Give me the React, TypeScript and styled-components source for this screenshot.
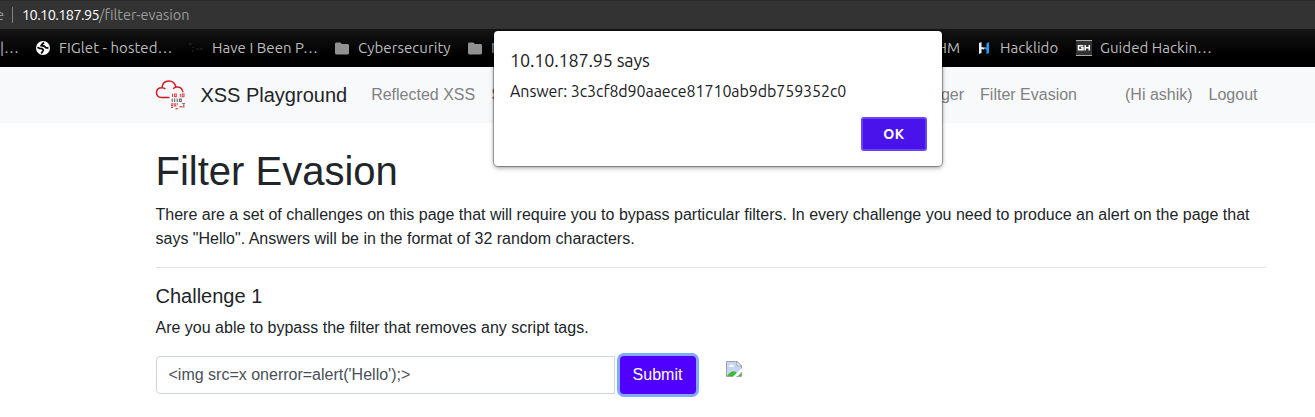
import React from "react";
import styled, { createGlobalStyle } from "styled-components";

const GlobalStyle = createGlobalStyle`
  * { box-sizing: border-box; }
  body { margin: 0; background: #fff; overflow: hidden; }
  button, input { font: inherit; }
`;

const ui = `"Ubuntu", "Noto Sans", sans-serif`;

const Screen = styled.div`
  position: relative;
  width: 1315px;
  height: 417px;
  overflow: hidden;
  color: #212529;
  font: 16px/24px "Liberation Sans", Arial, sans-serif;
`;

const AddressBar = styled.div`
  display: flex;
  align-items: center;
  height: 29px;
  background: #333;
  border-top: 1px solid #2a2a2a;
  color: #9b9b9b;
  font: 14.5px/28px ${ui};
  white-space: nowrap;
`;

const Scheme = styled.span`
  width: 12px;
  margin-left: -4px;
`;

const Separator = styled.span`
  width: 1px;
  height: 16px;
  margin: 0 9px 0 4px;
  background: #808080;
`;

const Host = styled.span`
  color: #fff;
  letter-spacing: -0.6px;
`;

const Bookmarks = styled.div`
  display: flex;
  align-items: center;
  height: 38px;
  background: linear-gradient(#161616, #000 65%);
  color: #bdbdbd;
  font: 15px/34px ${ui};
  white-space: nowrap;
`;

const Bookmark = styled.div<{ $width: number; $gap?: number; $end?: boolean }>`
  display: flex;
  flex: none;
  align-items: center;
  justify-content: ${(p) => (p.$end ? "flex-end" : "flex-start")};
  gap: ${(p) => p.$gap ?? 8}px;
  width: ${(p) => p.$width}px;
  height: 36px;
  letter-spacing: 0.05px;
  svg { flex: none; display: block; }
`;

const Navbar = styled.nav`
  display: flex;
  align-items: center;
  height: 56px;
  padding: 0 57.5px 0 155px;
  background: #f8f9fa;
  color: #808182;
  white-space: nowrap;
`;

const Brand = styled.div`
  display: flex;
  align-items: center;
  gap: 14.4px;
  margin-right: 24px;
  color: #212529;
  font-size: 20px;
  line-height: 30px;
  svg { display: block; }
`;

const Links = styled.div<{ $right?: boolean }>`
  display: flex;
  gap: 16px;
  margin-left: ${(p) => (p.$right ? "auto" : "0")};
`;

const User = styled.span`
  margin-left: 32px;
`;

const Main = styled.main`
  width: 1110px;
  margin-left: 155.5px;
  padding-top: 24px;
`;

const Title = styled.h1`
  margin: 0 0 8px;
  font-size: 40px;
  font-weight: 400;
  line-height: 48px;
`;

const Text = styled.p`
  margin: 0;
`;

const Rule = styled.hr`
  height: 1px;
  margin: 16px 0;
  border: 0;
  background: #e2e2e2;
`;

const Subtitle = styled.h5`
  margin: 0 0 8px;
  font-size: 20px;
  font-weight: 400;
  line-height: 24px;
`;

const Form = styled.div`
  display: flex;
  align-items: flex-start;
  margin-top: 16px;
`;

const Field = styled.input`
  width: 459px;
  height: 38px;
  padding: 0 12px;
  border: 1px solid #ced4da;
  border-radius: 4px 0 0 4px;
  outline: 0;
  background: #fff;
  color: #495057;
`;

const Submit = styled.button`
  width: 76px;
  height: 38px;
  margin: 0 30px 0 5px;
  padding: 0;
  border: 0;
  border-radius: 4px;
  background: #4f00ff;
  box-shadow: 0 0 0 3px #83a7fb;
  color: #fff;
`;

const Result = styled.div`
  padding-top: 5px;
  svg { display: block; }
`;

const Dialog = styled.section`
  position: absolute;
  top: 31px;
  left: 494px;
  display: flex;
  flex-direction: column;
  width: 448px;
  height: 135px;
  padding: 16px 15px 15px 16px;
  border-radius: 4px;
  background: #fff;
  box-shadow: 0 0 1px 1px rgba(0, 0, 0, 0.35), 0 2px 5px rgba(0, 0, 0, 0.35);
  color: #202124;
  font-family: ${ui};
`;

const DialogTitle = styled.div`
  font-size: 18px;
  line-height: 26px;
  letter-spacing: -0.16px;
`;

const DialogMessage = styled.div`
  margin-top: 6px;
  font-size: 16px;
  line-height: 24px;
  letter-spacing: -0.08px;
`;

const OkButton = styled.button`
  align-self: flex-end;
  width: 66px;
  height: 34px;
  margin-top: auto;
  padding: 0;
  border: 2px solid #6544f8;
  border-radius: 3px;
  background: #4a13ec;
  color: #fff;
  font-size: 14px;
  font-weight: 700;
  letter-spacing: 0.6px;
`;

const Globe = () => (
  <svg width="14" height="14" viewBox="0 0 14 14">
    <circle cx="7" cy="7" r="7" fill="#fff" />
    <path d="M1.5 6.2 3.6 7.5 6 7.6 7.3 9 6.6 10.5 5.2 12.5M8 1.5 6.3 3 5.2 4.7 8.2 5.1 9.8 6.7 12.5 7.2" fill="none" stroke="#000" strokeWidth="1.7" />
  </svg>
);

const Folder = () => (
  <svg width="14" height="13" viewBox="0 0 14 13">
    <path d="M1.4 0.5H5.4L6.9 2H12.6Q14 2 14 3.4V11.1Q14 12.5 12.6 12.5H1.4Q0 12.5 0 11.1V1.9Q0 .5 1.4 .5Z" fill="#919191" />
  </svg>
);

const Pwned = () => (
  <svg width="16" height="16" viewBox="0 0 16 16">
    <path d="M1 3 2 5M3 3V5M5 7V8M5 10 4 12M8 9H11M12 9H15" fill="none" stroke="#292929" />
  </svg>
);

const HackMark = () => (
  <svg width="16" height="16" viewBox="0 0 16 16">
    <path d="M0 0H16V16H0Z" fill="#050505" />
    <path d="M3 3 5.5 2V7L8 7.5V9.5L5.5 9V13L3 14Z" fill="#eee" />
    <path d="M10.5 3.5 13 2V13L10.5 14V9.5L8 9V7L10.5 7.5Z" fill="#229cf2" />
  </svg>
);

const GuidedMark = () => (
  <svg width="16" height="16" viewBox="0 0 16 16">
    <path d="M0 0H16V16H0Z" fill="#333" />
    <path d="M0 .5H16M0 15.5H16" stroke="#aaa" />
    <path d="M7.3 5.7H2.5V9.7H7V7.8H4.8M9.2 5V10.5M13.3 5V10.5M9.2 7.8H13.3" fill="none" stroke="#fff" strokeWidth="1.5" />
  </svg>
);

const CloudLogo = () => (
  <svg width="31" height="30" viewBox="0 0 31 30">
    <path d="M14.5 17.4H6.3C3.2 17.4 1.5 15.2 1.5 12.8 1.5 9.7 3.7 7.7 6.9 7.7 7.4 3.7 10.1 1 13.8 1 17.4 1 20.1 3.4 20.8 7.1 24.3 6.2 27.7 8.6 27.9 12.2M6.9 7.7Q9.2 7.7 10.4 9M18 8.6 20.8 7.1" fill="none" stroke="#d11b22" strokeWidth="1.5" />
    <g fill="none" strokeWidth="1.1">
      <path d="M17.5 13.8V17M19.5 14H21.3V16.6H19.5ZM25.3 13.8V17M27.2 14H29V16.6H27.2Z" stroke="#df4a50" />
      <path d="M17.2 18.6V22M19.7 18.6V22M22.2 18.6V22M24.5 19H26.3V21.5H24.5Z" stroke="#666" />
      <path d="M16 24H23M16 25.7H22M24.5 26.7H29.5M20.5 28.8H23.5" stroke="#df5559" strokeDasharray="2.3 .6" strokeWidth="1.4" />
      <path d="M27 23.5H30M28.8 23V26M16 27.5H18" stroke="#777" />
    </g>
  </svg>
);

const BrokenImage = () => (
  <svg width="16" height="16" viewBox="0 0 16 16">
    <path d="M.5 .5H11L15.5 5V8L8 15.5H.5Z" fill="#c5d5f7" stroke="#a4a4a4" />
    <path d="M11 .5V5H15.5Z" fill="#fff" stroke="#a4a4a4" />
    <path d="M3 6V4.5H4.2Q4.8 2.5 6.4 4H7.8V6Z" fill="#fff" />
    <path d="M1 15Q5 9 9.5 10.5L11 12 8 15Z" fill="#3dbb35" />
    <path d="M6.7 16 16 7V10L10 16Z" fill="#fff" />
    <path d="M15.5 11V15.5H10.5" fill="none" stroke="#a4a4a4" />
    <path d="M12 15 15 12V15Z" fill="#3dbb35" />
  </svg>
);

export default function App() {
  return (
    <>
      <GlobalStyle />
      <Screen>
        <AddressBar>
          <Scheme>e</Scheme>
          <Separator />
          <span><Host>10.10.187.95</Host>/filter-evasion</span>
        </AddressBar>
        <Bookmarks>
          <Bookmark $width={36}>|…</Bookmark>
          <Bookmark $width={152} $gap={9}><Globe />FIGlet - hosted…</Bookmark>
          <Bookmark $width={147}><Pwned />Have I Been P…</Bookmark>
          <Bookmark $width={133} $gap={9}><Folder />Cybersecurity</Bookmark>
          <Bookmark $width={60} $gap={9}><Folder />N</Bookmark>
          <Bookmark $width={432} $end>THM</Bookmark>
          <Bookmark $width={16} />
          <Bookmark $width={100}><HackMark />Hacklido</Bookmark>
          <Bookmark $width={160}><GuidedMark />Guided Hackin…</Bookmark>
        </Bookmarks>
        <Navbar>
          <Brand><CloudLogo />XSS Playground</Brand>
          <Links><span>Reflected XSS</span><span>Stored XSS</span></Links>
          <Links $right>
            <span>Key-Logger</span>
            <span>Filter Evasion</span>
            <User>(Hi ashik)</User>
            <span>Logout</span>
          </Links>
        </Navbar>
        <Main>
          <Title>Filter Evasion</Title>
          <Text>
            There are a set of challenges on this page that will require you to bypass particular filters. In every challenge you need to produce an alert on the page that says "Hello". Answers will be in the format of 32 random characters.
          </Text>
          <Rule />
          <Subtitle>Challenge 1</Subtitle>
          <Text>Are you able to bypass the filter that removes any script tags.</Text>
          <Form>
            <Field defaultValue="<img src=x onerror=alert('Hello');>" spellCheck={false} />
            <Submit>Submit</Submit>
            <Result><BrokenImage /></Result>
          </Form>
        </Main>
        <Dialog>
          <DialogTitle>10.10.187.95 says</DialogTitle>
          <DialogMessage>Answer: 3c3cf8d90aaece81710ab9db759352c0</DialogMessage>
          <OkButton>OK</OkButton>
        </Dialog>
      </Screen>
    </>
  );
}
